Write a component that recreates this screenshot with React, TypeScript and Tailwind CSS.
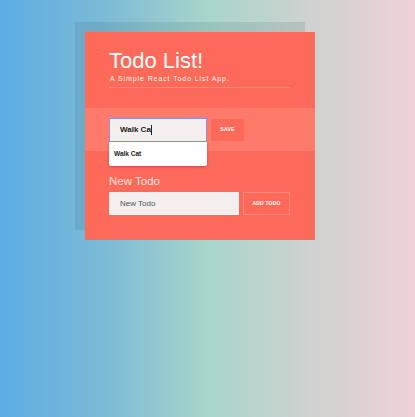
import { useState } from 'react';

export default function App() {
  const [newTodo, setNewTodo] = useState('');
  const draft = 'Walk Ca';

  return (
    <div
      className="w-[415px] h-[417px] overflow-hidden bg-[linear-gradient(90deg,#5eade4_0%,#7bbad6_25%,#a8d5cb_50%,#cfd2d0_75%,#efd2d6_100%)]"
      style={{ fontFamily: '"Liberation Sans", Arial, sans-serif' }}
    >
      <div className="pt-[32px] pl-[85px]">
        <div className="w-[230px] h-[208px] bg-[#fe6a5a] shadow-[-10px_-10px_0_rgba(60,90,100,0.14)] flex flex-col">
          {/* header */}
          <div className="px-[24px] pt-[17px]">
            <h1 className="text-[22px] leading-[24px] text-white">Todo List!</h1>
            <p className="mt-[2px] text-[7px] leading-[8px] tracking-[0.9px] text-white/95 pl-[1px]">
              A Simple React Todo List App.
            </p>
            <div className="mt-[4px] w-[181px] h-px bg-white/20" />
          </div>

          {/* edit band */}
          <div className="mt-[20px] h-[43px] bg-[#ff7a6a] px-[24px] pt-[10px] flex items-start gap-[4px]">
            <div className="relative">
              <div className="w-[98px] h-[24px] bg-[#f2efee] border-[1.5px] border-[#8d90d6] flex items-center pl-[10px]">
                <span className="text-[8px] font-bold text-[#222]">{draft}</span>
                <span className="w-px h-[10px] bg-[#222]" />
              </div>
              <div className="absolute left-0 top-[24px] w-[98px] h-[24px] bg-white rounded-b-[2px] shadow-[0_1px_3px_rgba(0,0,0,0.25)] flex items-center pl-[5px]">
                <span className="text-[6.5px] font-bold text-[#222]">Walk Cat</span>
              </div>
            </div>
            <button className="mt-[1px] w-[33px] h-[22px] bg-[#fe6a5a] text-white text-[5px] font-bold tracking-[0.3px]">
              SAVE
            </button>
          </div>

          {/* new todo */}
          <div className="px-[24px] pt-[24px]">
            <label className="block text-[11.5px] leading-[13px] text-[#ffe3df]">New Todo</label>
            <div className="mt-[4px] flex gap-[4px]">
              <input
                value={newTodo}
                onChange={(e) => setNewTodo(e.target.value)}
                placeholder="New Todo"
                className="w-[130px] h-[23px] bg-[#f2efee] pl-[11px] text-[8px] text-[#444] placeholder:text-[#555] outline-none"
              />
              <button className="w-[47px] h-[23px] border border-white/20 text-white text-[5px] font-bold tracking-[0.2px]">
                ADD TODO
              </button>
            </div>
          </div>
        </div>
      </div>
    </div>
  );
}
